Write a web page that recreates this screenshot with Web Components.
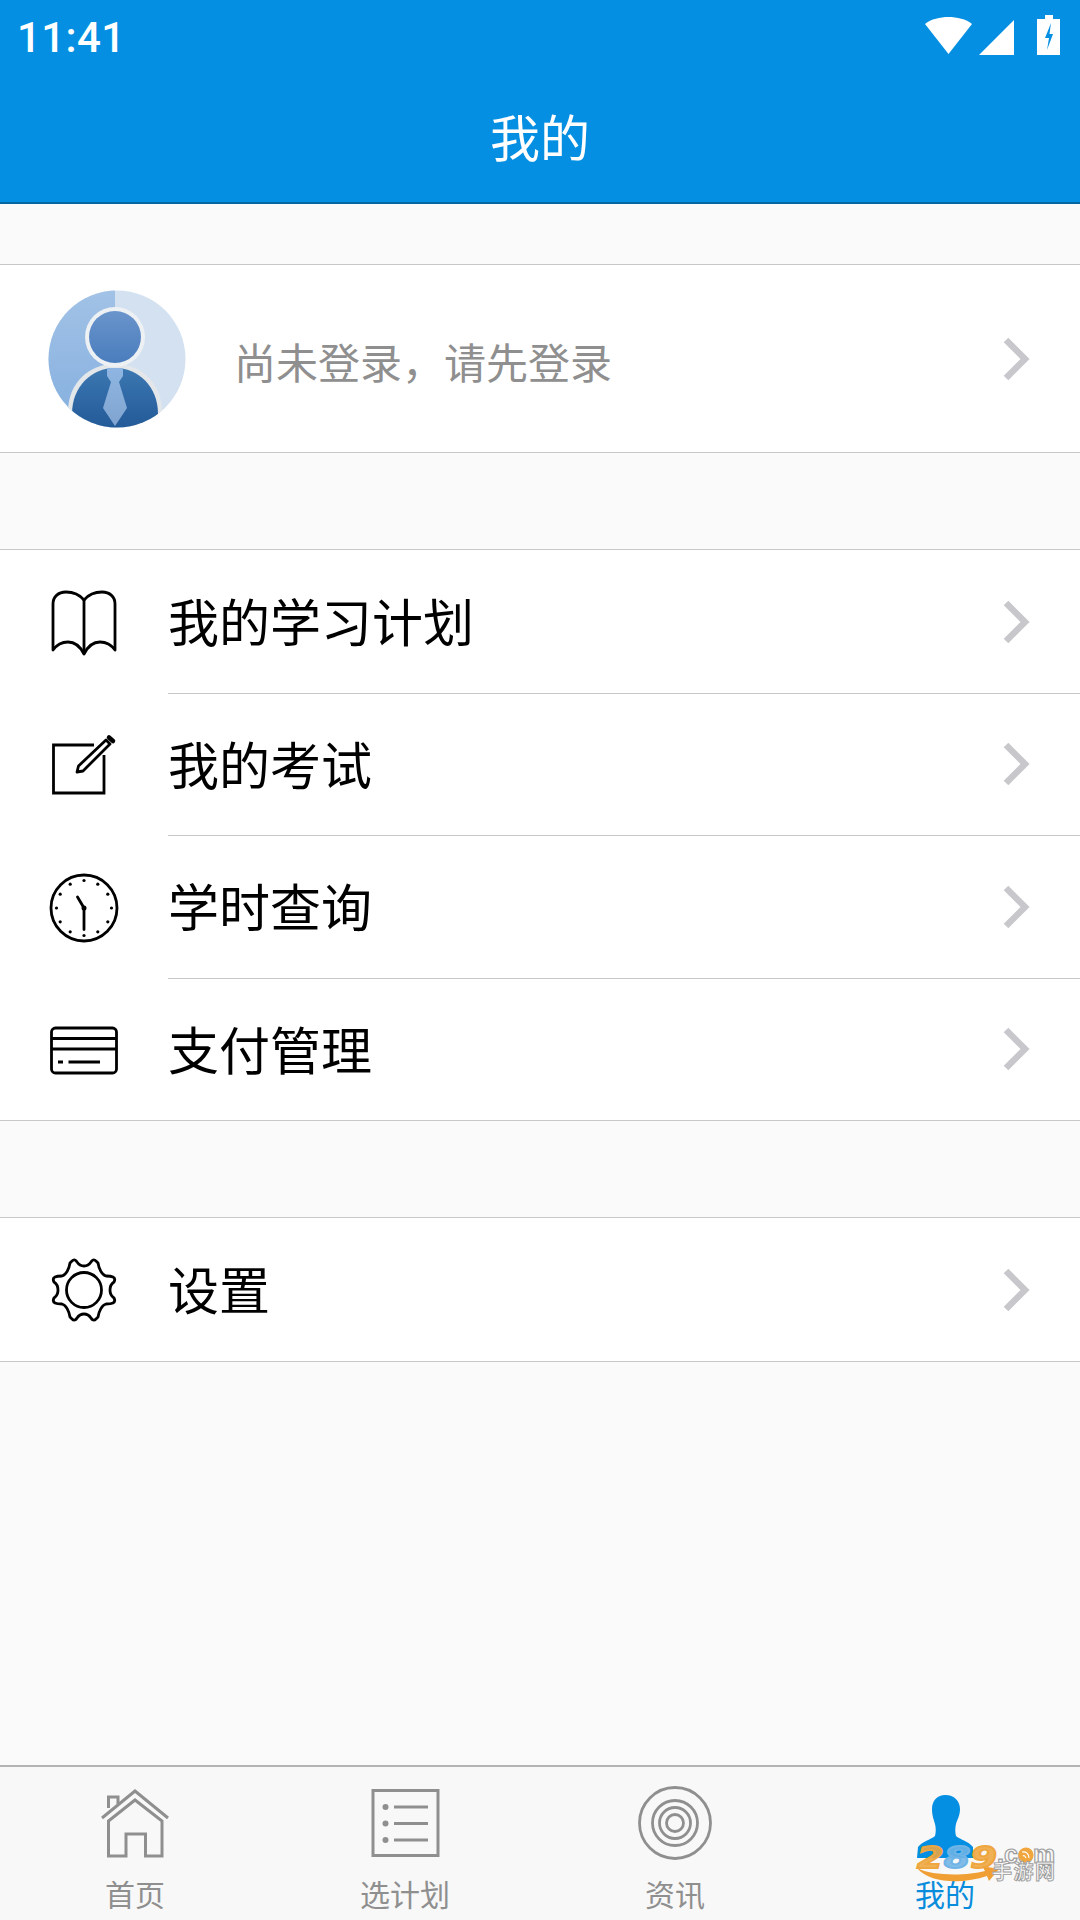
<!DOCTYPE html>
<html lang="zh">
<head>
<meta charset="utf-8">
<title>我的</title>
<style>
  html, body { margin: 0; height: 100%; }
  body { font-family: "Noto Sans CJK SC", "Noto Sans", sans-serif; }
</style>
</head>
<body>
<my-screen>
  <status-bar slot="top"></status-bar>
  <app-header slot="top">我的</app-header>

  <profile-row>尚未登录&#xFF0C;请先登录</profile-row>

  <menu-group>
    <menu-row icon="book">我的学习计划</menu-row>
    <menu-row icon="edit">我的考试</menu-row>
    <menu-row icon="clock">学时查询</menu-row>
    <menu-row icon="card">支付管理</menu-row>
  </menu-group>

  <menu-group>
    <menu-row icon="gear">设置</menu-row>
  </menu-group>

  <tab-bar slot="bottom">
    <tab-item icon="home">首页</tab-item>
    <tab-item icon="list">选计划</tab-item>
    <tab-item icon="target">资讯</tab-item>
    <tab-item icon="person" active>我的</tab-item>
  </tab-bar>
  <water-mark slot="bottom"></water-mark>
</my-screen>

<script>
  (function app(customElements) {
    'use strict';

    const ICONS = {
      book: `<svg viewBox="44 582 80 80" fill="none" stroke="#000" stroke-width="2.800" stroke-linejoin="round">
        <path d="M84 600C79 594 73 592 66 592C58 592 53 597 53 604V650C58 643 63 642 68 642C74 642 80 646 84 654C88 646 94 642 100 642C105 642 110 643 115 650V604C115 597 110 592 102 592C95 592 89 594 84 600Z"/>
        <path d="M84 600V654"/></svg>`,
      edit: `<svg viewBox="44 725 80 80" fill="none" stroke="#000" stroke-width="2.800">
        <path d="M94 745H53.500V793H104V755"/>
        <path d="M77 772L78.500 766L106 740L110 744L83 771Z" stroke-linejoin="round"/>
        <path d="M109 737.500L113 741" stroke-width="4.500" stroke-linecap="round"/></svg>`,
      clock: `<svg viewBox="44 867 80 80" fill="none" stroke="#000">
        <circle cx="84" cy="908" r="33" stroke-width="2.800"/>
        <g fill="#000" stroke="none">
          <circle cx="84" cy="880.500" r="1.600"/><circle cx="97.800" cy="884.200" r="1.600"/><circle cx="107.800" cy="894.200" r="1.600"/>
          <circle cx="111.500" cy="908" r="1.600"/><circle cx="107.800" cy="921.800" r="1.600"/><circle cx="97.800" cy="931.800" r="1.600"/>
          <circle cx="84" cy="935.500" r="1.600"/><circle cx="70.200" cy="931.800" r="1.600"/><circle cx="60.200" cy="921.800" r="1.600"/>
          <circle cx="56.500" cy="908" r="1.600"/><circle cx="60.200" cy="894.200" r="1.600"/><circle cx="70.200" cy="884.200" r="1.600"/>
          <circle cx="84" cy="908" r="2.500"/>
        </g>
        <path d="M77.500 897L84 908V929.500" stroke-width="2.800" stroke-linecap="round"/></svg>`,
      card: `<svg viewBox="44 1009 80 80" fill="none" stroke="#000" stroke-width="2.800">
        <rect x="51.500" y="1028" width="65" height="45" rx="4"/>
        <path d="M51.500 1038.500H116.500M51.500 1049H116.500"/>
        <path d="M58 1062H63M68.500 1062H100"/></svg>`,
      gear: `<svg viewBox="44 1250 80 80" fill="none" stroke="#000" stroke-width="2.800" stroke-linejoin="round">
        <path d="M72 1261C74 1259 76 1260 77 1262C79 1265 81 1266 84 1266C87 1266 89 1265 91 1262C92 1260 94 1259 96 1261C97 1262 97 1262 98 1263C99 1269 102 1275 106 1276C108 1276 111 1276 113 1277C115 1278 115 1280 114 1282C111 1284 110 1287 110 1290C110 1293 111 1296 114 1298C115 1300 115 1302 113 1303C111 1304 108 1304 106 1304C102 1305 99 1311 98 1317C97 1318 97 1318 96 1319C94 1321 92 1320 91 1318C89 1315 87 1314 84 1314C81 1314 79 1315 77 1318C76 1320 74 1321 72 1319C71 1318 71 1318 70 1317C69 1311 66 1305 62 1304C60 1304 57 1304 55 1303C53 1302 53 1300 54 1298C57 1296 58 1293 58 1290C58 1287 57 1284 54 1282C53 1280 53 1278 55 1277C57 1276 60 1276 62 1276C66 1275 69 1269 70 1263C71 1262 71 1262 72 1261Z"/>
        <circle cx="84" cy="1290" r="17.500"/></svg>`,
      home: `<svg viewBox="98 1786 74 74" fill="none" stroke="#8f8f8f" stroke-width="3">
        <path d="M102 1818L135 1791L168 1818"/>
        <path d="M108.500 1821L135 1800L162 1821V1856H145.500V1834H126V1856H108.500Z"/>
        <path d="M108.500 1808V1797H118V1804"/></svg>`,
      list: `<svg viewBox="368 1786 74 74" fill="none" stroke="#8f8f8f" stroke-width="3">
        <rect x="373" y="1790.500" width="65" height="65"/>
        <path d="M394 1807H428M394 1823.500H428M394 1840H428"/>
        <g fill="#8f8f8f" stroke="none"><circle cx="385.500" cy="1807" r="3"/><circle cx="385.500" cy="1823.500" r="3"/><circle cx="385.500" cy="1840" r="3"/></g></svg>`,
      target: `<svg viewBox="638 1786 74 74" fill="none" stroke="#8f8f8f" stroke-width="2.800">
        <circle cx="675" cy="1823" r="35.500"/><circle cx="675" cy="1823" r="22.500"/>
        <circle cx="675" cy="1823" r="15.500"/><circle cx="675" cy="1823" r="8.500"/></svg>`,
      person: `<svg viewBox="908 1786 74 74" fill="#058fe2">
        <path d="M945.500 1795C954 1795 960 1801 960 1809C960 1816 957 1820 956 1824C955 1828 955 1832 956 1836C961 1840 968 1841 973 1847L973 1858H917L918 1847C923 1841 930 1840 935 1836C936 1832 936 1828 935 1824C934 1820 932 1816 932 1809C932 1801 937 1795 945.500 1795Z"/></svg>`
    };

    function iconFor(name) {
      return ICONS[name] || '';
    }

    class MyScreen extends HTMLElement {
      constructor() {
        super();
        this.attachShadow({mode: 'open'}).innerHTML = `
          <style>
            :host { display: flex; flex-direction: column; position: relative; width: 1080px; height: 1920px; background: #fafafa; overflow: hidden; }
            main { flex: 1; padding-top: 60px; display: flex; flex-direction: column; gap: 96px; }
          </style>
          <slot name="top"></slot>
          <main><slot></slot></main>
          <slot name="bottom"></slot>`;
      }
    }

    class StatusBar extends HTMLElement {
      constructor() {
        super();
        this.attachShadow({mode: 'open'}).innerHTML = `
          <style>
            :host { display: flex; height: 72px; background: #058fe2; color: #fff; align-items: center; padding: 0 20px 0 17px; }
            .time { font: 500 42px/72px Roboto, sans-serif; letter-spacing: .4px; flex: 1; padding-top: 3px; }
            svg { display: block; width: 136px; height: 72px; }
          </style>
          <span class="time">11:41</span>
          <svg viewBox="924 0 136 72" fill="#fff">
            <path d="M925 24C931 19 940 17 948.500 17C957 17 966 19 972 24L948.500 54Z"/>
            <path d="M1014 20V55H979Z"/>
            <path d="M1045 15H1053V19H1060V55H1037V19H1045Z"/>
            <path d="M1051 23L1045 38H1049L1047 50L1053 34H1049.500Z" fill="#058fe2"/>
          </svg>`;
      }
    }

    class AppHeader extends HTMLElement {
      constructor() {
        super();
        this.attachShadow({mode: 'open'}).innerHTML = `
          <style>
            :host { display: flex; height: 125px; padding-bottom: 5px; background: #058fe2; border-bottom: 2px solid #04679f; color: #fff; font-size: 50px; align-items: center; justify-content: center; }
          </style>
          <slot></slot>`;
      }
    }

    class RowChevron extends HTMLElement {
      constructor() {
        super();
        this.attachShadow({mode: 'open'}).innerHTML = `
          <style>
            :host { display: block; width: 30px; height: 44px; margin-right: 50px; }
            svg { display: block; width: 30px; height: 44px; }
          </style>
          <svg viewBox="0 0 30 44" fill="none" stroke="#c8c8cc" stroke-width="6.500"><path d="M6 3L25 22L6 41"/></svg>`;
      }
    }

    class ProfileRow extends HTMLElement {
      constructor() {
        super();
        this.attachShadow({mode: 'open'}).innerHTML = `
          <style>
            :host { display: flex; align-items: center; height: 187px; background: #fff; border-top: 1px solid #c8c8c8; border-bottom: 1px solid #c8c8c8; }
            svg { width: 138px; height: 138px; margin-left: 48px; flex: none; }
            .name { flex: 1; margin-left: 48px; font-size: 42px; color: #8f8f8f; padding-top: 3px; }
          </style>
          <svg viewBox="0 0 138 138">
            <defs>
              <clipPath id="round"><circle cx="69" cy="69" r="68.500"/></clipPath>
              <linearGradient id="head" x1="0" y1="0" x2="0" y2="1"><stop offset="0" stop-color="#6a94cb"/><stop offset="1" stop-color="#4a7dbd"/></linearGradient>
              <linearGradient id="body" x1="0" y1="0" x2="0" y2="1"><stop offset="0" stop-color="#3c78b2"/><stop offset="1" stop-color="#235a98"/></linearGradient>
              <linearGradient id="left" x1="0" y1="0" x2="0" y2="1"><stop offset="0" stop-color="#a2c2e6"/><stop offset="1" stop-color="#84afdf"/></linearGradient>
              <linearGradient id="tie" x1="0" y1="0" x2="0" y2="1"><stop offset="0" stop-color="#8fb6e2"/><stop offset="1" stop-color="#80a4cf"/></linearGradient>
            </defs>
            <g clip-path="url(#round)">
              <rect width="138" height="138" fill="#d3e1f1"/>
              <rect width="67" height="138" fill="url(#left)"/>
              <path d="M20 138V122C20 92 42 74 67 74C92 74 114 92 114 122V138Z" fill="#e4e7ea"/>
              <path d="M24 138V124C24 96 44 78 67 78C90 78 110 96 110 124V138Z" fill="url(#body)"/>
              <path d="M59 78H75V86L71 92L79 118L67 136L55 118L63 92L59 86Z" fill="url(#tie)"/>
              <circle cx="67" cy="47" r="30" fill="#eef1f4"/>
              <circle cx="67" cy="47" r="26" fill="url(#head)"/>
            </g>
          </svg>
          <span class="name"><slot></slot></span>
          <row-chevron></row-chevron>`;
      }
    }

    class MenuGroup extends HTMLElement {
      constructor() {
        super();
        this.attachShadow({mode: 'open'}).innerHTML = `
          <style>
            :host { display: block; background: #fff; padding-top: 1px; border-top: 1px solid #c8c8c8; border-bottom: 1px solid #c8c8c8; }
          </style>
          <slot></slot>`;
      }
    }

    class MenuRow extends HTMLElement {
      constructor() {
        super();
        this.attachShadow({mode: 'open'}).innerHTML = `
          <style>
            :host { display: flex; align-items: stretch; height: 142.500px; }
            :host(:last-child) { height: 141.500px; }
            :host(:not(:last-child)) .body { border-bottom: 1px solid #c8c8c8; }
            .icon { width: 168px; flex: none; display: flex; align-items: center; justify-content: center; }
            .icon svg { display: block; width: 80px; height: 80px; }
            .body { flex: 1; display: flex; align-items: center; font-size: 51px; color: #000; }
            .text { flex: 1; padding-bottom: 3px; }
          </style>
          <div class="icon">${iconFor(this.getAttribute('icon'))}</div>
          <div class="body"><span class="text"><slot></slot></span><row-chevron></row-chevron></div>`;
      }
    }

    class TabBar extends HTMLElement {
      constructor() {
        super();
        this.attachShadow({mode: 'open'}).innerHTML = `
          <style>
            :host { display: grid; grid-template-columns: repeat(4, 1fr); height: 153px; background: #f8f8f8; border-top: 2px solid #b4b4b4; }
          </style>
          <slot></slot>`;
      }
    }

    class TabItem extends HTMLElement {
      constructor() {
        super();
        const active = this.hasAttribute('active');
        this.attachShadow({mode: 'open'}).innerHTML = `
          <style>
            :host { display: flex; flex-direction: column; align-items: center; padding-top: 19px; color: ${active ? '#0a8cdc' : '#8f8f8f'}; font-size: 30px; line-height: 40px; }
            svg { display: block; width: 74px; height: 74px; }
            .label { margin-top: 13px; }
          </style>
          ${iconFor(this.getAttribute('icon'))}
          <span class="label"><slot></slot></span>`;
      }
    }

    // store watermark stamped over the last tab
    class WaterMark extends HTMLElement {
      constructor() {
        super();
        this.attachShadow({mode: 'open'}).innerHTML = `
          <style>
            :host { display: block; position: absolute; left: 908px; top: 1832px; width: 160px; height: 60px; }
            svg { display: block; width: 160px; height: 60px; }
          </style>
          <svg viewBox="908 1832 160 60">
            <path d="M917 1868C932 1876 966 1876 985 1871L982 1866L999 1869L989 1881L987 1876C964 1884 930 1884 917 1868Z" fill="#ef9f34"/>
            <text x="917" y="1868" font-family="DejaVu Sans, sans-serif" font-size="30" font-weight="700" font-style="italic" fill="#efa63e" fill-opacity=".9" stroke="#efa63e" stroke-width="1.800" textLength="80" lengthAdjust="spacingAndGlyphs">2<tspan fill="#6fb4e6" stroke="#6fb4e6">8</tspan>9</text>
            <text x="997" y="1863" font-family="Liberation Sans, sans-serif" font-size="26" font-weight="700" fill="#f6f6f6" stroke="#9c9c9c" stroke-width="1.200" textLength="58" lengthAdjust="spacingAndGlyphs">.com</text>
            <circle cx="1026" cy="1855" r="7.500" fill="#f0a63c"/>
            <path d="M1022 1852C1026 1851 1029 1854 1029 1858M1023 1856C1024 1855 1025 1856 1026 1858" fill="none" stroke="#fff" stroke-width="1.200"/>
            <text x="992" y="1879" font-size="20" font-family="Noto Sans CJK SC, sans-serif" font-weight="700" fill="#f6f6f6" stroke="#9c9c9c" stroke-width=".9" textLength="63">手游网</text>
          </svg>`;
      }
    }

    customElements.define('my-screen', MyScreen);
    customElements.define('status-bar', StatusBar);
    customElements.define('app-header', AppHeader);
    customElements.define('row-chevron', RowChevron);
    customElements.define('profile-row', ProfileRow);
    customElements.define('menu-group', MenuGroup);
    customElements.define('menu-row', MenuRow);
    customElements.define('tab-bar', TabBar);
    customElements.define('tab-item', TabItem);
    customElements.define('water-mark', WaterMark);
  })(window.customElements);
</script>
</body>
</html>
